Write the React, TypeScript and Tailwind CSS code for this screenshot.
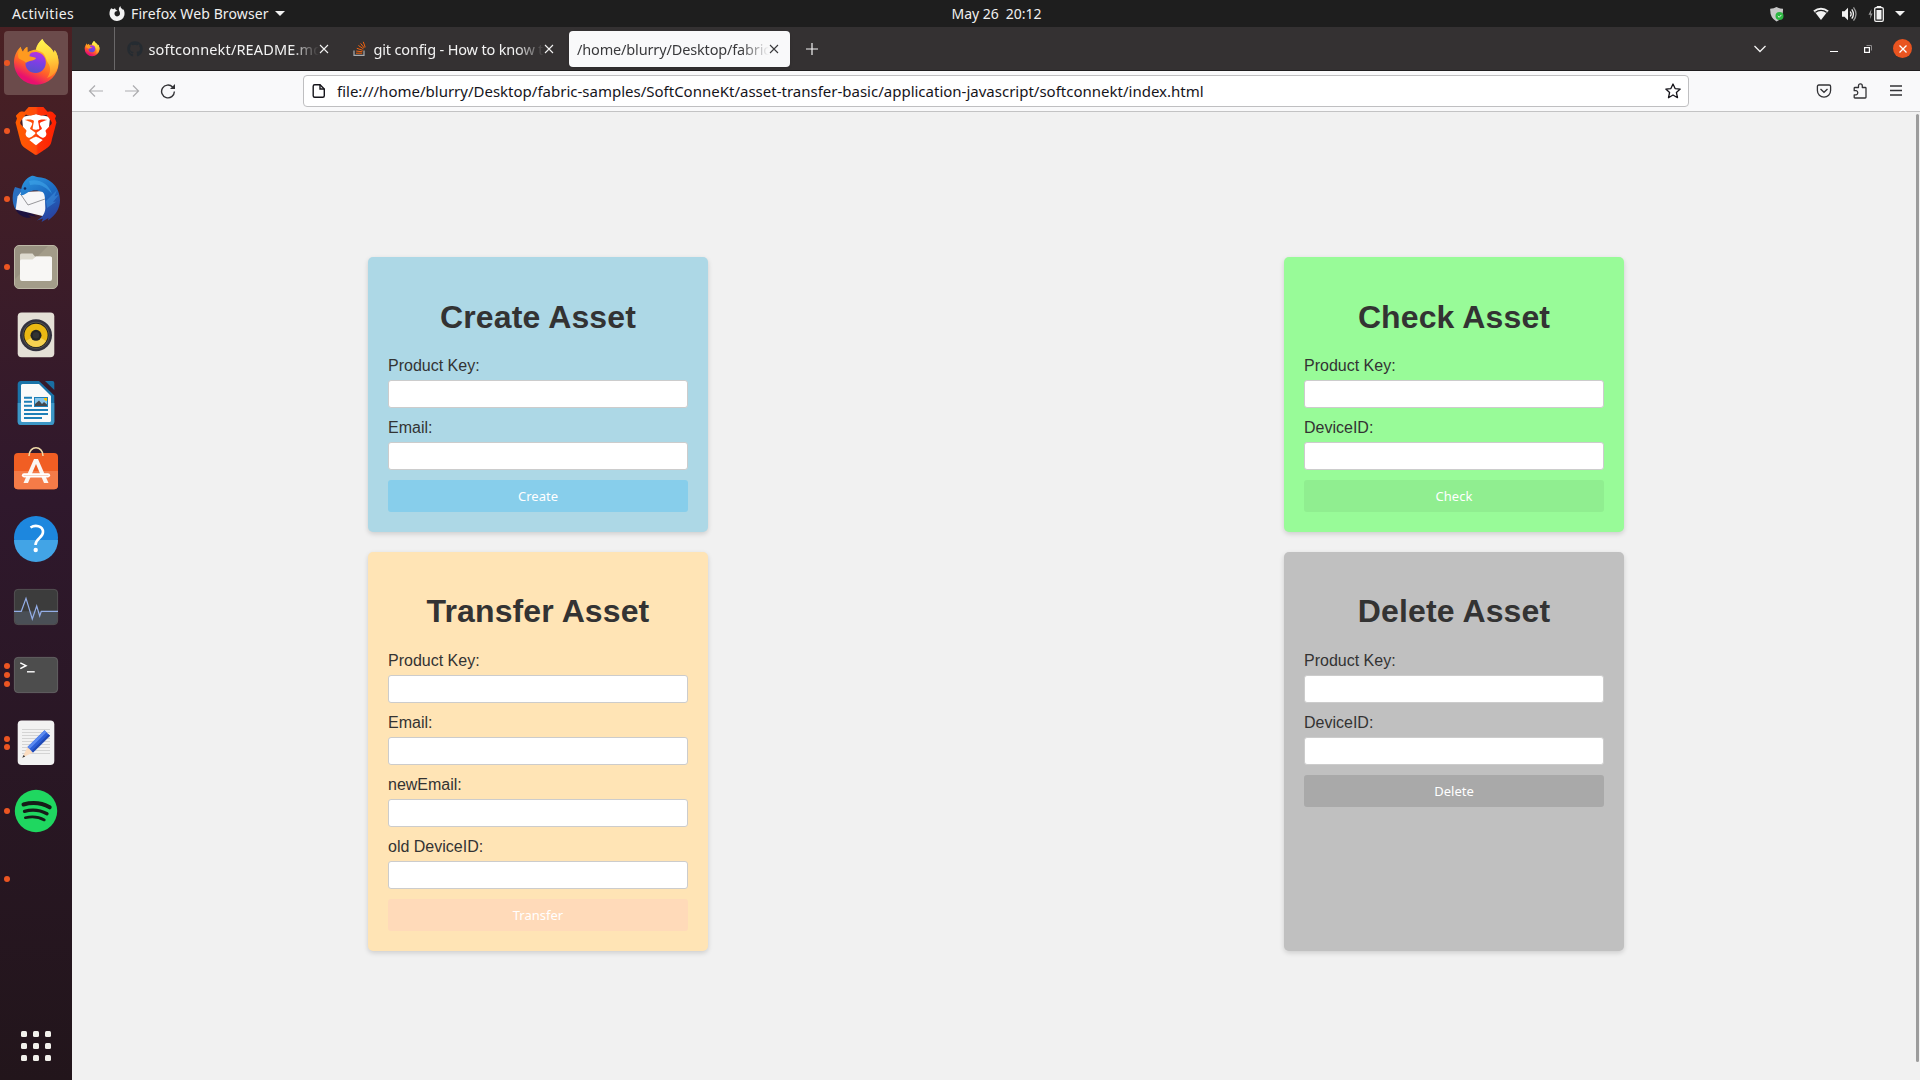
import type { ReactNode } from "react";
import { FaGithub } from "react-icons/fa";
import { SiBrave } from "react-icons/si";

function FirefoxIcon({ className, id }: { className: string; id: string }) {
  return (
    <svg viewBox="0 0 48 48" className={className}>
      <defs>
        <linearGradient id={id + "-body"} x1="0.8" y1="0.1" x2="0.35" y2="1">
          <stop offset="0" stopColor="#ffe14a" />
          <stop offset="0.35" stopColor="#ffa01f" />
          <stop offset="0.65" stopColor="#ff5a2c" />
          <stop offset="0.9" stopColor="#e8106f" />
        </linearGradient>
        <linearGradient id={id + "-flame"} x1="0.5" y1="0" x2="0.6" y2="1">
          <stop offset="0" stopColor="#fff44f" />
          <stop offset="0.5" stopColor="#ffd33c" />
          <stop offset="1" stopColor="#ff8a26" />
        </linearGradient>
        <linearGradient id={id + "-globe"} x1="0.6" y1="0" x2="0.4" y2="1">
          <stop offset="0" stopColor="#b833e1" />
          <stop offset="0.5" stopColor="#7b3fe4" />
          <stop offset="1" stopColor="#5750c8" />
        </linearGradient>
      </defs>
      <path
        d="M8.7 7.7C4 12 2 18 2 23.5A22.3 22.3 0 0 0 46.6 23.5C46.6 19 45 14 42.7 11L42 14C40 8 33 6 30.3 0C27 3 24.5 7 24 10.5C20 11 17 12 15.5 13.5L15.3 8C13 9 12 10.5 11 13C9.8 11.5 9 9.5 8.7 7.7Z"
        fill={`url(#${id}-body)`}
      />
      <path
        d="M30.3 0C33 6 40 8 42 14L42.7 11C45 14 46.6 19 46.4 24C46 32 41 37 35 39C39 34 39 28 36 24C34 21 34 17 31 14C28.5 12 25 11.5 24 10.5C24.5 7 27 3 30.3 0Z"
        fill={`url(#${id}-flame)`}
      />
      <path d="M17 15C22 11 31 13 33.4 20C35.5 28 30 34 23.7 34C18 34 13 30 13.5 24C14 20 17 18 17 15Z" fill={`url(#${id}-globe)`} />
      <path
        d="M8.7 7.7C6 12 5.5 16 6.5 19C8.500 21 12 21 14 24C15.500 22 22 22 24 19.6C24.500 18.200 20 18 17.500 17.200C17.500 15.500 18.500 14 20 12.500C18 12.500 16.500 13 15.500 13.500L15.300 8C13 9 12 10.500 11 13C9.800 11.500 9 9.500 8.700 7.700Z"
        fill="#ff9a1f"
      />
    </svg>
  );
}

function BraveIcon() {
  return (
    <div className="relative size-12">
      <svg viewBox="0 0 48 48" className="absolute inset-0 size-12">
        <path d="M10 10L24 7L38 10L36 32L24 43L12 32Z" fill="#fff" />
        <defs>
          <linearGradient id="brave-fill" x1="0" x2="1">
            <stop offset="0.1" stopColor="#ff5a00" />
            <stop offset="0.5" stopColor="#ff4a0c" />
            <stop offset="0.55" stopColor="#fd3208" />
            <stop offset="1" stopColor="#ff2000" />
          </linearGradient>
        </defs>
      </svg>
      <SiBrave className="absolute inset-0 size-12 fill-[url(#brave-fill)]" />
    </div>
  );
}

function ThunderbirdIcon() {
  return (
    <svg viewBox="0 0 48 48" className="size-12">
      <defs>
        <linearGradient id="tb-blue" x1="0.2" y1="0" x2="0.7" y2="1">
          <stop offset="0" stopColor="#2b93dd" />
          <stop offset="0.5" stopColor="#1c69c0" />
          <stop offset="1" stopColor="#2b3f9e" />
        </linearGradient>
      </defs>
      <path d="M3 12C0 18-.5 28 3.500 34.500L16 16Z" fill="#2a6fc0" />
      <path d="M3 34C8 42 14 43.500 19 42.500L16 40L25 42L14 34Z" fill="#1d1240" />
      <path d="M5.500 21.500L9 17L33.500 16L34 38L32.500 41.500L3.700 34.500Z" fill="#f6f6f8" />
      <path d="M8.500 19L16 30L33 24" fill="none" stroke="#8c8c90" strokeWidth="0.9" />
      <path
        d="M9 17.500C9 9 14 3 20 .8C22 .3 24 2 27 2.200C39 3 48 13 48 25C48 33 44 40 36 45.500L36.500 43L29.500 47L31 43.500L25 45.500C31 42 34 37 33.300 31C33 26 33.500 19 30.500 17C26 14.800 20 15 16.500 17C13 19.500 11 20.500 8.500 20Z"
        fill="url(#tb-blue)"
      />
      <path d="M17 6C27 3 37 9 40 19C34 11 26 8 18 10Z" fill="#3fa5ea" opacity="0.6" />
      <path d="M34 26L45 15L42.500 21.500L47 19.500L41 27L44.500 26.500L35 33Z" fill="#3d8fe0" opacity="0.55" />
      <circle cx="13" cy="13.500" r="1.300" fill="#132a5c" />
    </svg>
  );
}

function FilesIcon() {
  return (
    <svg viewBox="0 0 48 48" className="size-12">
      <rect x="2.500" y="2.500" width="43" height="43" rx="4.500" fill="#989180" stroke="#bdb8a6" />
      <path d="M3 36L36 3H42Q45 3 45 7V42Q45 45 42 45H6Q3 45 3 42Z" fill="#aaa38f" opacity="0.6" />
      <path d="M8 18V12Q8 10.500 9.500 10.500H20.500L23 13.500H38Q40 13.500 40 15.500V18Z" fill="#dddace" />
      <path d="M8 18Q8 16.500 9.500 16.500H20.500L24 13.500H38.500Q40 13.500 40 15V36Q40 38 38 38H10Q8 38 8 36Z" fill="#f8f7f5" />
    </svg>
  );
}

function RhythmboxIcon() {
  return (
    <svg viewBox="0 0 48 48" className="size-12">
      <rect x="5.700" y="1.500" width="36.600" height="44.800" rx="4" fill="#e4e0d6" />
      <circle cx="24" cy="24.300" r="16" fill="#32323e" />
      <circle cx="24" cy="24.300" r="13.500" fill="#55554f" />
      <circle cx="24" cy="24.300" r="12.500" fill="#20201c" />
      <circle cx="24" cy="24.300" r="11.600" fill="#eab913" />
      <path d="M14 30A11.300 11.300 0 0 0 34 30L24 24Z" fill="#f9dd6c" opacity="0.7" />
      <circle cx="24" cy="24.300" r="5.500" fill="#242424" />
      <circle cx="24" cy="24.300" r="3.200" fill="#333" />
    </svg>
  );
}

function WriterIcon() {
  return (
    <svg viewBox="0 0 48 48" className="size-12">
      <path d="M9 2H27L42.300 16.500V42.500Q42.300 46 39 46H9Q5.700 46 5.700 42.500V5.500Q5.700 2 9 2Z" fill="#1a73a8" />
      <path d="M5.700 24H42.300V42.500Q42.300 46 39 46H9Q5.700 46 5.700 42.500Z" fill="#3d97c6" />
      <path d="M10.500 5H27L39 17V41.500Q39 43 37.500 43H10.500Q9 43 9 41.500V6.500Q9 5 10.500 5Z" fill="#fafafa" />
      <path d="M33 2H40.500Q42.300 2 42.300 4V11Z" fill="#1a6fa3" />
      <path d="M12 18.700H20M12 22.700H20M12 26.700H20M12 31H36M12 35H36M12 39H30" stroke="#1d7fb8" strokeWidth="1.900" />
      <rect x="22" y="18" width="14" height="10" fill="#1d7fb8" />
      <rect x="23" y="19" width="12" height="8" fill="#86c5ea" />
      <path d="M32 19H35V22Q32 22 32 19Z" fill="#ffc400" />
      <path d="M23 27V25L27 21.500L30 25L32 23L35 25.500V27Z" fill="#44474a" />
    </svg>
  );
}

function SoftwareIcon() {
  return (
    <svg viewBox="0 0 48 48" className="size-12">
      <rect x="2" y="6" width="44" height="36.300" rx="4" fill="#f15e23" />
      <path d="M2 24H46V38.300Q46 42.300 42 42.300H6Q2 42.300 2 38.300Z" fill="#f47b48" />
      <path d="M17 9C17-1.900 31-1.900 31 9" fill="none" stroke="#f0dba8" strokeWidth="1.500" />
      <path d="M22 12H26L36.500 36H32L24 17L16 36H11.500Z" fill="#fbf6f2" />
      <path d="M12 28.300H36" stroke="#fff" strokeWidth="4.200" strokeLinecap="round" />
      <path d="M12 28.500H36" stroke="#f9d3c2" strokeWidth="1" strokeLinecap="round" />
    </svg>
  );
}

function HelpIcon() {
  return (
    <svg viewBox="0 0 48 48" className="size-12 -translate-y-px">
      <circle cx="24" cy="24" r="22" fill="#1d87de" />
      <path d="M2 26A22 22 0 0 0 46 26Z" fill="#42a4e6" />
      <path d="M18.500 13.500C23 10.500 31 11.500 31 18C31 24 23.500 24 23.500 31" fill="none" stroke="#fff" strokeWidth="2.600" />
      <circle cx="23.700" cy="36" r="2.200" fill="#fff" />
    </svg>
  );
}

function MonitorIcon() {
  return (
    <svg viewBox="0 0 48 48" className="size-12">
      <rect x="2.400" y="6.400" width="43.200" height="35.200" rx="3.500" fill="#3c3c3c" stroke="#5b5b5b" strokeWidth="0.800" />
      <path d="M3 28.300H45V38Q45 41 42 41H6Q3 41 3 38Z" fill="#4a4f56" />
      <path d="M2 28.300H9.300L14 15.300L20.300 36L24.700 23L27.700 33L29.300 28.300H46" fill="none" stroke="#94aee8" strokeWidth="1.200" />
    </svg>
  );
}

function TerminalIcon() {
  return (
    <svg viewBox="0 0 48 48" className="size-12">
      <rect x="2.400" y="6.400" width="43.200" height="35.200" rx="3.500" fill="#4d4d4d" stroke="#6c6c6c" strokeWidth="0.800" />
      <path d="M8.300 11.800L14 14.700L8.300 17.700" fill="none" stroke="#fff" strokeWidth="1.500" />
      <path d="M15 20.800H22.700" stroke="#fff" strokeWidth="1.400" />
    </svg>
  );
}

function EditorIcon() {
  return (
    <svg viewBox="0 0 48 48" className="size-12">
      <rect x="5.700" y="1.500" width="36.600" height="44.500" rx="4" fill="#f2f2f2" />
      <path d="M10 10.500H38M10 13.500H38M10 16.500H38M10 19.500H38M10 22.500H38M10 25.500H38M10 28.500H38M10 31.500H38M10 34.500H38" stroke="#d0d0d0" strokeWidth="0.900" />
      <path d="M10.300 38.700L15.500 28L21 33.500Z" fill="#fbdcc0" />
      <path d="M10.300 38.700L11.600 36L13.200 37.400Z" fill="#333" />
      <path d="M15.500 28L32.500 11.200L38 16.700L21 33.500Z" fill="#2c5fd8" />
      <path d="M15.500 28L32.500 11.200L34.500 13.200L17.500 30Z" fill="#5b8af0" />
      <path d="M19.500 32L36.500 15.200L38 16.700L21 33.500Z" fill="#1f49b5" />
    </svg>
  );
}

function SpotifyIcon() {
  return (
    <svg viewBox="0 0 48 48" className="size-12">
      <circle cx="24" cy="24" r="21.200" fill="#1fd760" />
      <g fill="none" stroke="#161c18" strokeLinecap="round">
        <path d="M11.500 17.500C20 15.200 30 16 37.700 20.300" strokeWidth="4" />
        <path d="M12.500 24.300C20 22.300 28.500 23.200 35 26.800" strokeWidth="3.300" />
        <path d="M13.300 30.800C20 29.200 27 30 32.300 33" strokeWidth="2.600" />
      </g>
    </svg>
  );
}

const dockItems: { name: string; dots: number; icon: ReactNode; active?: boolean }[] = [
  { name: "firefox", dots: 1, icon: <FirefoxIcon className="size-12" id="ff-dock" />, active: true },
  { name: "brave", dots: 1, icon: <BraveIcon /> },
  { name: "thunderbird", dots: 1, icon: <ThunderbirdIcon /> },
  { name: "files", dots: 1, icon: <FilesIcon /> },
  { name: "rhythmbox", dots: 0, icon: <RhythmboxIcon /> },
  { name: "writer", dots: 0, icon: <WriterIcon /> },
  { name: "software", dots: 0, icon: <SoftwareIcon /> },
  { name: "help", dots: 0, icon: <HelpIcon /> },
  { name: "monitor", dots: 0, icon: <MonitorIcon /> },
  { name: "terminal", dots: 3, icon: <TerminalIcon /> },
  { name: "editor", dots: 2, icon: <EditorIcon /> },
  { name: "spotify", dots: 1, icon: <SpotifyIcon /> },
  { name: "unnamed", dots: 1, icon: null },
];

function Dock() {
  return (
    <aside className="flex w-[72px] shrink-0 flex-col justify-between bg-linear-to-b from-[#4a2023] via-[#2f182c] via-45% to-[#22151b] pt-1 pb-[19px]">
      <div className="flex flex-col items-center gap-1">
        {dockItems.map((item) => (
          <div
            key={item.name}
            className={
              "relative flex size-16 items-center justify-center rounded " + (item.active ? "bg-[#6b4b4b]" : "")
            }
          >
            <div className="absolute inset-y-0 left-0 flex flex-col justify-center gap-[2.7px]">
              {Array.from({ length: item.dots }, (_, i) => (
                <span key={i} className="size-1.5 rounded-full bg-[#ec5522]" />
              ))}
            </div>
            {item.icon}
          </div>
        ))}
      </div>
      <div className="mx-auto grid grid-cols-3 gap-1.5">
        {Array.from({ length: 9 }, (_, i) => (
          <span key={i} className="size-1.5 rounded-[1.5px] bg-[#f2f1ec]" />
        ))}
      </div>
    </aside>
  );
}

function TopBar() {
  return (
    <header className="relative flex h-[27px] shrink-0 items-center bg-[#1e1e1e] text-sm text-[#f0f0f0]">
      <span className="w-[97px] pl-3 tracking-[0.37px]">Activities</span>
      <svg viewBox="0 0 16 16" className="ml-3 size-4">
        <path
          d="M2.200 2.200L4.200 3.200L6 2.300L6.600 3.600L8.600 5C6.500 5 5.300 6.300 5.500 8C5.800 10 7.500 10.800 9 10.300C11 9.800 11.600 7.500 10.500 5.500C9.500 4 9.500 2 11.300 0C11.500 2.500 13.500 2.500 14 4L14.500 3.300C15.500 5 15.800 7.500 15.400 9.300A7.600 7.600 0 0 1 .5 8.500C.4 6 .9 3.800 2.200 2.200Z"
          fill="#f2f2f2"
        />
      </svg>
      <span className="ml-1.5 tracking-[0.120px]">Firefox Web Browser</span>
      <span className="ml-1.5 border-x-[5px] border-t-[5px] border-x-transparent border-t-[#f2f2f2]" />
      <div className="absolute inset-x-0 flex justify-center">
        <span className="whitespace-pre pl-[73px] tracking-[-0.03px]">{"May 26  20:12"}</span>
      </div>
      <div className="ml-auto flex items-center pr-[15px]">
        <svg viewBox="0 0 16 16" className="mr-[28px] size-4">
          <path d="M7.500 1Q10 2.700 14 2.800Q14.500 12 7.500 15.500Q.8 12 1.200 2.800Q5 2.700 7.500 1Z" fill="#c8c8c8" />
          <circle cx="10.500" cy="10" r="4" fill="#2db742" />
          <path d="M8.800 10L10.200 11.300L12.400 8.900" fill="none" stroke="#fff" strokeWidth="0.900" />
        </svg>
        <svg viewBox="0 0 16 16" className="size-4">
          <path d="M0.500 4.600A11.500 11.500 0 0 1 15.500 4.600L14.200 6.100A9.500 9.500 0 0 0 1.800 6.100Z" fill="#f2f2f2" />
          <path d="M2.600 7A8.500 8.500 0 0 1 13.400 7L8 14Z" fill="#f2f2f2" />
          <path d="M0.500 4.600L2.600 7M15.500 4.600L13.400 7" stroke="#f2f2f2" strokeWidth="0.500" />
        </svg>
        <svg viewBox="0 0 16 16" className="ml-3 size-4" fill="none" stroke="#f2f2f2" strokeWidth="1.300">
          <path d="M1 5.200H3.500L7 1.700V14.300L3.500 10.800H1Z" fill="#f2f2f2" stroke="none" />
          <path d="M9.300 5.500Q11 8 9.300 10.500M10.800 3.300Q14 8 10.800 12.700" />
          <path d="M12.500 1.300Q17.500 8 12.500 14.700" stroke="#9a9a9a" />
        </svg>
        <svg viewBox="0 0 16 16" className="ml-[11px] size-4">
          <path d="M3.500 3L0.500 8.800H2.500L2 13L4.500 7.500H2.800Z" fill="#9a9a9a" />
          <path d="M9 1.200V0.500H13V1.200" stroke="#f2f2f2" />
          <rect x="6.700" y="1.700" width="8.600" height="13.600" rx="1.300" fill="none" stroke="#f2f2f2" strokeWidth="1.300" />
          <rect x="8.500" y="4" width="5" height="9.500" fill="#f2f2f2" />
        </svg>
        <span className="ml-[11px] border-x-[5px] border-t-[5px] border-x-transparent border-t-[#f2f2f2]" />
      </div>
    </header>
  );
}

function CloseGlyph() {
  return (
    <svg viewBox="0 0 10 10" className="size-2.5 shrink-0" fill="none" stroke="currentColor" strokeWidth="1.100">
      <path d="M1 1L9 9M9 1L1 9" />
    </svg>
  );
}

function StackOverflowIcon() {
  return (
    <svg viewBox="0 0 16 16" className="size-4 shrink-0" fill="none">
      <path d="M2 9.500V14.300H12V9.500" stroke="#a9acaf" strokeWidth="1.200" />
      <path d="M4 12.200H10.200M4.200 10L10.400 10.800M4.800 7.300L10.700 9.300M6.400 4.500L11.500 7.900M8.600 2.400L12.300 7M11.300 .8L13.200 6.300" stroke="#f2640f" strokeWidth="1" />
    </svg>
  );
}

const fade =
  "min-w-0 flex-1 overflow-hidden whitespace-nowrap pt-[2px] mask-r-from-[calc(100%-28px)] mask-r-to-100%";

function TabBar() {
  return (
    <div className="flex h-11 shrink-0 items-center border-b border-[#1f1d1e] bg-[#343132] text-[14.500px] text-[#f3f3f3]">
      <div className="flex h-full w-[43px] items-center justify-center border-r border-[#6a6869] pr-[2px]">
        <FirefoxIcon className="size-4" id="ff-tab" />
      </div>
      <div className="flex h-9 items-center gap-1 pl-1">
        <div className="flex h-9 w-[221px] items-center pr-[11px] pl-2">
          <FaGithub className="size-4 shrink-0 text-[#252b31]" />
          <span className={"ml-[5.500px] tracking-[0.150px] " + fade}>softconnekt/README.md</span>
          <CloseGlyph />
        </div>
        <div className="flex h-9 w-[221px] items-center pr-[11px] pl-2">
          <StackOverflowIcon />
          <span className={"ml-[5.500px] tracking-[-0.160px] " + fade}>git config - How to know the</span>
          <CloseGlyph />
        </div>
        <div className="flex h-9 w-[221px] items-center rounded bg-[#f9f9fa] pr-[11px] pl-2 text-[#3a3a3c] shadow-sm">
          <span className={"tracking-[-0.150px] " + fade}>/home/blurry/Desktop/fabric-samples</span>
          <CloseGlyph />
        </div>
      </div>
      <svg viewBox="0 0 12 12" className="ml-4 size-3" stroke="#f3f3f3" strokeWidth="1.200">
        <path d="M6 0V12M0 6H12" />
      </svg>
      <div className="ml-auto flex items-center pr-2 text-[#f3f3f3]">
        <svg viewBox="0 0 12 8" className="h-2 w-3" fill="none" stroke="currentColor" strokeWidth="1.300">
          <path d="M0.500 1L6 6.500L11.500 1" />
        </svg>
        <span className="mt-[5px] ml-16 h-px w-2 bg-white" />
        <svg viewBox="0 0 8 8" className="ml-[26px] size-2" fill="none">
          <path d="M2.500 .5H7.500V5.500" stroke="#8d8b8c" />
          <rect x="0.600" y="2.600" width="4.800" height="4.800" stroke="#fff" strokeWidth="1.200" />
        </svg>
        <span className="ml-[21px] flex size-[19px] items-center justify-center rounded-full bg-[#e95420]">
          <svg viewBox="0 0 8 8" className="size-2" stroke="#fff" strokeWidth="1.300">
            <path d="M0.500 0.500L7.500 7.500M7.500 0.500L0.500 7.500" />
          </svg>
        </span>
      </div>
    </div>
  );
}

function NavBar() {
  return (
    <div className="flex h-[41px] shrink-0 items-center border-b border-[#c3c3c4] bg-[#f9f9fa] pr-4 text-[#333336]">
      <svg viewBox="0 0 16 16" className="ml-4 size-4 text-[#adadaf]" fill="none" stroke="currentColor" strokeWidth="1.200">
        <path d="M15 8H1.500M7 2.500L1.500 8L7 13.500" />
      </svg>
      <svg viewBox="0 0 16 16" className="ml-5 size-4 text-[#adadaf]" fill="none" stroke="currentColor" strokeWidth="1.200">
        <path d="M1 8H14.500M9 2.500L14.500 8L9 13.500" />
      </svg>
      <svg viewBox="0 0 16 16" className="ml-5 size-4" fill="none" stroke="currentColor" strokeWidth="1.400">
        <path d="M12.600 4A6.400 6.400 0 1 0 14.400 8.600" />
        <path d="M15 1V6H10Z" fill="currentColor" stroke="none" />
      </svg>
      <div className="ml-[127px] flex h-8 w-[1386px] items-center rounded border border-[#bfbfc1] bg-white pl-[7px] text-[15px] text-[#15141a]">
        <svg viewBox="0 0 16 16" className="size-4" fill="none" stroke="currentColor" strokeWidth="1.400">
          <path d="M3.700 1.700H9L13.300 6V12.800Q13.300 14.300 11.800 14.300H3.700Q2.200 14.300 2.200 12.800V3.200Q2.200 1.700 3.700 1.700Z" />
          <path d="M9 1.700V6H13.300" />
        </svg>
        <span className="ml-2.5 flex-1 whitespace-nowrap">
          file:///home/blurry/Desktop/fabric-samples/SoftConneKt/asset-transfer-basic/application-javascript/softconnekt/index.html
        </span>
        <svg viewBox="0 0 16 16" className="mr-[7px] size-4" fill="none" stroke="currentColor" strokeWidth="1.300" strokeLinejoin="round">
          <path d="M8 1L10.100 5.600L15.200 6.100L11.400 9.500L12.500 14.700L8 12L3.500 14.700L4.600 9.500L.8 6.100L5.900 5.600Z" />
        </svg>
      </div>
      <div className="ml-auto flex items-center gap-5">
        <svg viewBox="0 0 16 16" className="size-4" fill="none" stroke="currentColor" strokeWidth="1.300">
          <path d="M2.800 2H13.200Q14.600 2 14.600 3.400V7.500A6.600 6.600 0 0 1 1.400 7.500V3.400Q1.400 2 2.800 2Z" />
          <path d="M4.500 6L8 9.300L11.500 6" />
        </svg>
        <svg viewBox="0 0 16 16" className="size-4" fill="none" stroke="currentColor" strokeWidth="1.300" strokeLinejoin="round">
          <path d="M2.200 6.700V5.300Q2.200 4.500 3 4.500H6.500V3Q6.500 .9 8.400 .9T10.300 3V4.500H13.200Q14 4.500 14 5.300V14.200Q14 15 13.200 15H3Q2.200 15 2.200 14.200V11.800H4.200Q5.800 11.600 5.800 9.800T4.200 7.700H2.200Z" />
        </svg>
        <svg viewBox="0 0 16 16" className="size-4" fill="none" stroke="currentColor" strokeWidth="1.300">
          <path d="M2 3H14M2 7.500H14M2 12H14" />
        </svg>
      </div>
    </div>
  );
}

type AssetCardProps = {
  title: string;
  fields: string[];
  action: string;
  cardClass: string;
  headingClass: string;
  buttonClass: string;
};

function AssetCard({ title, fields, action, cardClass, headingClass, buttonClass }: AssetCardProps) {
  return (
    <section
      className={
        "w-[340px] justify-self-center rounded-[5px] p-5 font-['Liberation_Sans',Arial,sans-serif] text-[#333] shadow-[0_2px_5px_rgba(0,0,0,0.15)] " +
        cardClass
      }
    >
      <h1 className={"h-[79px] text-center text-[32px] leading-9 font-bold tracking-[0.120px] " + headingClass}>{title}</h1>
      {fields.map((label) => (
        <label key={label} className="mb-2.5 block text-base leading-6">
          <span className="block h-6 leading-[19px]">{label}</span>
          <input className="block h-7 w-full rounded-[3px] border border-[#ccc] bg-white px-1" />
        </label>
      ))}
      <button
        className={
          "block h-8 w-full rounded-[3px] pt-[2px] font-['Noto_Sans',sans-serif] text-[13px] text-white " + buttonClass
        }
      >
        {action}
      </button>
    </section>
  );
}

export default function App() {
  return (
    <div className="flex h-screen w-full flex-col overflow-hidden font-['Noto_Sans',sans-serif]">
      <TopBar />
      <div className="flex min-h-0 flex-1">
        <Dock />
        <div className="flex min-w-0 flex-1 flex-col">
          <TabBar />
          <NavBar />
          <main className="relative flex-1 bg-[#f1f1f1] px-2 pt-[145px]">
            <div className="grid grid-cols-2 gap-y-5">
              <AssetCard
                title="Create Asset"
                fields={["Product Key:", "Email:"]}
                action="Create"
                cardClass="bg-[#add8e6]"
                headingClass="pt-[22px]"
                buttonClass="bg-[#87ceeb]"
              />
              <AssetCard
                title="Check Asset"
                fields={["Product Key:", "DeviceID:"]}
                action="Check"
                cardClass="bg-[#98fb98]"
                headingClass="pt-[22px]"
                buttonClass="bg-[#90ee90]"
              />
              <AssetCard
                title="Transfer Asset"
                fields={["Product Key:", "Email:", "newEmail:", "old DeviceID:"]}
                action="Transfer"
                cardClass="bg-[#ffe4b5]"
                headingClass="pt-[21px]"
                buttonClass="bg-[#ffdab9]"
              />
              <AssetCard
                title="Delete Asset"
                fields={["Product Key:", "DeviceID:"]}
                action="Delete"
                cardClass="bg-[#c0c0c0]"
                headingClass="pt-[21px]"
                buttonClass="bg-[#a9a9a9]"
              />
            </div>
            <div className="absolute top-0.5 right-px h-[948px] w-[3px] rounded-full bg-[#9c9c9c]" />
          </main>
        </div>
      </div>
    </div>
  );
}
